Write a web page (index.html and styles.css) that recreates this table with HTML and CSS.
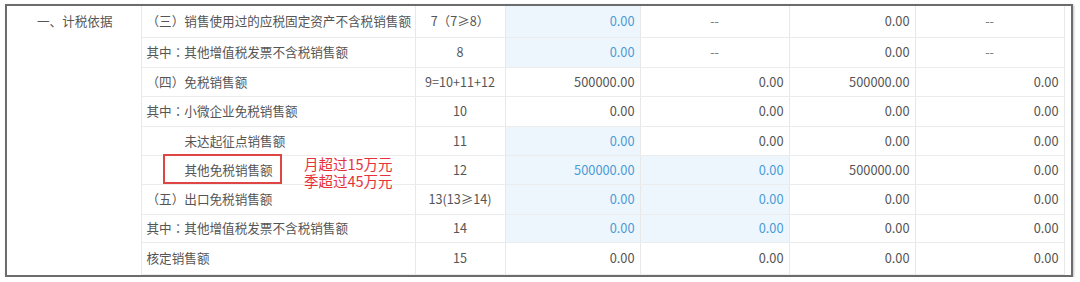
FILE: index.html
```html
<!DOCTYPE html>
<html lang="zh-CN">
<head>
<meta charset="utf-8">
<title>计税依据</title>
<link rel="stylesheet" href="styles.css">
</head>
<body>
<div class="frame">
  <table class="grid">
    <colgroup>
      <col class="c1"><col class="c2"><col class="c3"><col class="c4"><col class="c5"><col class="c6"><col class="c7">
    </colgroup>
    <tr class="h31">
      <td rowspan="9" class="cat">一、计税依据</td>
      <td class="name">（三）销售使用过的应税固定资产不含税销售额</td>
      <td class="no">7（7≥8）</td>
      <td class="num edit">0.00</td>
      <td class="dash">--</td>
      <td class="num">0.00</td>
      <td class="dash">--</td>
    </tr>
    <tr class="h30">
      <td class="name">其中<span class="p" lang="ja">：</span>其他增值税发票不含税销售额</td>
      <td class="no">8</td>
      <td class="num edit">0.00</td>
      <td class="dash">--</td>
      <td class="num">0.00</td>
      <td class="dash">--</td>
    </tr>
    <tr class="h29">
      <td class="name">（四）免税销售额</td>
      <td class="no">9=10+11+12</td>
      <td class="num">500000.00</td>
      <td class="num">0.00</td>
      <td class="num">500000.00</td>
      <td class="num">0.00</td>
    </tr>
    <tr class="h30">
      <td class="name">其中<span class="p" lang="ja">：</span>小微企业免税销售额</td>
      <td class="no">10</td>
      <td class="num">0.00</td>
      <td class="num">0.00</td>
      <td class="num">0.00</td>
      <td class="num">0.00</td>
    </tr>
    <tr class="h29">
      <td class="name ind">未达起征点销售额</td>
      <td class="no">11</td>
      <td class="num edit">0.00</td>
      <td class="num">0.00</td>
      <td class="num">0.00</td>
      <td class="num">0.00</td>
    </tr>
    <tr class="h29">
      <td class="name ind">其他免税销售额</td>
      <td class="no">12</td>
      <td class="num edit">500000.00</td>
      <td class="num edit">0.00</td>
      <td class="num">500000.00</td>
      <td class="num">0.00</td>
    </tr>
    <tr class="h30">
      <td class="name">（五）出口免税销售额</td>
      <td class="no">13(13≥14)</td>
      <td class="num edit">0.00</td>
      <td class="num edit">0.00</td>
      <td class="num">0.00</td>
      <td class="num">0.00</td>
    </tr>
    <tr class="h28">
      <td class="name">其中<span class="p" lang="ja">：</span>其他增值税发票不含税销售额</td>
      <td class="no">14</td>
      <td class="num edit">0.00</td>
      <td class="num edit">0.00</td>
      <td class="num">0.00</td>
      <td class="num">0.00</td>
    </tr>
    <tr class="h32">
      <td class="name">核定销售额</td>
      <td class="no">15</td>
      <td class="num">0.00</td>
      <td class="num">0.00</td>
      <td class="num">0.00</td>
      <td class="num">0.00</td>
    </tr>
  </table>
  <div class="mark-box"></div>
  <div class="note">月超过15万元<br>季超过45万元</div>
</div>
</body>
</html>
```
FILE: styles.css
```css
html, body {
  margin: 0;
  padding: 0;
  background: #ffffff;
}
body {
  padding: 4px 0 0 5px;
  font-family: "Noto Sans CJK SC", "Noto Sans", sans-serif;
}
.frame {
  position: relative;
  box-sizing: border-box;
  width: 1068px;
  height: 273px;
  border: 2px solid #6c6c6c;
  box-shadow: 1px 1px 2px rgba(0, 0, 0, 0.25);
  background: #fff;
}
.grid {
  border-collapse: collapse;
  table-layout: fixed;
  width: 1057px;
  font-size: 12.6px;
  color: #555;
}
.c1 { width: 134px; }
.c2 { width: 274px; }
.c3 { width: 90px; }
.c4 { width: 135px; }
.c5 { width: 149px; }
.c6 { width: 126px; }
.c7 { width: 149px; }
.grid td {
  border-right: 1px solid #e8e8e8;
  border-bottom: 1px solid #ececec;
  padding: 0;
  white-space: nowrap;
  line-height: 16px;
}
.h28 { height: 28px; }
.h29 { height: 29px; }
.h30 { height: 30px; }
.h31 { height: 31px; }
.h32 { height: 32px; }
.grid td.cat {
  vertical-align: top;
  text-align: center;
  padding-top: 7px;
  padding-left: 2px;
  border-bottom: none;
}
.p {
  font-family: "Noto Sans CJK JP", "Noto Sans CJK SC", sans-serif;
}
.name { padding-left: 5px !important; }
.name.ind { padding-left: 43px !important; }
.no { text-align: center; }
.num {
  text-align: right;
  padding-right: 5px !important;
  font-size: 12.8px;
}
.dash {
  text-align: center;
  color: #777;
}
.edit {
  background: #eef6fd;
  color: #4a9bd6;
}
.mark-box {
  position: absolute;
  left: 156px;
  top: 148px;
  width: 119px;
  height: 30px;
  box-sizing: border-box;
  border: 2px solid #e04545;
}
.note {
  position: absolute;
  left: 297px;
  top: 149px;
  font-size: 14.5px;
  line-height: 17px;
  color: #e8313c;
}
```
